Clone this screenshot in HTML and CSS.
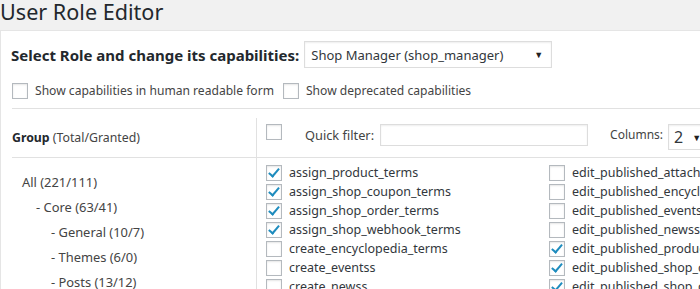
FILE: index.html
```html
<!DOCTYPE html>
<html>
<head>
<meta charset="utf-8">
<link rel="stylesheet" href="styles.css">
</head>
<body>
<h1 class="title">User Role Editor</h1>
<div class="panel">
  <div class="role-row">
    <span class="role-label">Select Role and change its capabilities:</span>
    <div class="select role-select"><span>Shop Manager (shop_manager)</span><span class="arrow">▼</span></div>
  </div>
  <div class="options">
    <label class="opt"><span class="cb"></span>Show capabilities in human readable form</label>
    <label class="opt"><span class="cb"></span>Show deprecated capabilities</label>
  </div>
  <div class="sep"></div>
  <div class="editor">
    <div class="group-head"><b>Group</b>&nbsp;(Total/Granted)</div>
    <div class="caps-head">
      <span class="cb"></span>
      <span class="qf-label">Quick filter:</span>
      <span class="qf-input"></span>
      <span class="col-label">Columns:</span>
      <div class="select col-select"><span>2</span><span class="arrow">▼</span></div>
    </div>
    <div class="groups">
      <div class="g lvl0">All (221/111)</div>
      <div class="g lvl1">- Core (63/41)</div>
      <div class="g lvl2">- General (10/7)</div>
      <div class="g lvl2">- Themes (6/0)</div>
      <div class="g lvl2">- Posts (13/12)</div>
    </div>
    <div class="caps">
      <div class="cap-col">
        <div class="cap"><span class="cb on"></span>assign_product_terms</div>
        <div class="cap"><span class="cb on"></span>assign_shop_coupon_terms</div>
        <div class="cap"><span class="cb on"></span>assign_shop_order_terms</div>
        <div class="cap"><span class="cb on"></span>assign_shop_webhook_terms</div>
        <div class="cap"><span class="cb"></span>create_encyclopedia_terms</div>
        <div class="cap"><span class="cb"></span>create_eventss</div>
        <div class="cap"><span class="cb"></span>create_newss</div>
      </div>
      <div class="cap-col">
        <div class="cap"><span class="cb"></span>edit_published_attachments</div>
        <div class="cap"><span class="cb"></span>edit_published_encyclopedias</div>
        <div class="cap"><span class="cb"></span>edit_published_eventss</div>
        <div class="cap"><span class="cb"></span>edit_published_newss</div>
        <div class="cap"><span class="cb on"></span>edit_published_products</div>
        <div class="cap"><span class="cb on"></span>edit_published_shop_coupons</div>
        <div class="cap"><span class="cb on"></span>edit_published_shop_orders</div>
      </div>
    </div>
  </div>
</div>
</body>
</html>
```
FILE: styles.css
```css
html, body {
  margin: 0;
  padding: 0;
  width: 700px;
  height: 289px;
  overflow: hidden;
  background: #f1f1f1;
  font-family: "Noto Sans", "Open Sans", sans-serif;
  color: #444;
  font-size: 12.5px;
}
.title {
  margin: 0;
  height: 30px;
  font-size: 21.6px;
  font-weight: 400;
  line-height: 24px;
  color: #23282d;
  padding-left: 0;
  overflow: visible;
}
.panel {
  background: #fff;
  border-top: 1px solid #e5e5e5;
  border-left: 1px solid #e5e5e5;
  padding: 10px 0 0 10px;
  height: 300px;
}
.role-row {
  display: flex;
  align-items: center;
  gap: 5px;
}
.role-label {
  font-weight: 700;
  font-size: 15px;
  color: #23282d;
}
.select {
  display: flex;
  align-items: center;
  justify-content: space-between;
  border: 1px solid #ddd;
  box-shadow: inset 0 1px 2px rgba(0,0,0,0.07);
  background: #fff;
  color: #32373c;
  box-sizing: border-box;
}
.role-select {
  width: 248px;
  height: 27px;
  padding: 0 8px 0 6px;
  font-size: 13px;
}
.arrow {
  font-size: 9px;
  color: #222;
}
.options {
  display: flex;
  gap: 9px;
  margin-top: 14px;
  padding-left: 1px;
}
.opt {
  display: flex;
  align-items: center;
  gap: 7px;
  color: #444;
  font-size: 12.1px;
}
.cb {
  display: inline-block;
  position: relative;
  width: 16px;
  height: 16px;
  box-sizing: border-box;
  border: 1px solid #b4b9be;
  background: #fff;
  box-shadow: inset 0 1px 2px rgba(0,0,0,0.1);
  flex: none;
}
.cb.on::after {
  content: "";
  position: absolute;
  left: 4px;
  top: 0px;
  width: 4px;
  height: 9px;
  border-right: 2.5px solid #1e8cbe;
  border-bottom: 2.5px solid #1e8cbe;
  transform: rotate(40deg);
}
.sep {
  height: 1px;
  background: #e1e1e1;
  margin: 9px 0 0 1px;
}
.editor {
  display: grid;
  grid-template-columns: 245px 1fr;
  grid-template-rows: 40px auto;
  margin-top: 9px;
  margin-left: 1px;
}
.group-head {
  border-bottom: 1px solid #e1e1e1;
  border-right: 1px solid #e1e1e1;
  display: flex;
  align-items: center;
  color: #444;
  font-size: 12.3px;
}
.group-head b {
  color: #23282d;
}
.caps-head {
  border-bottom: 1px solid #e1e1e1;
  display: flex;
  align-items: flex-start;
  padding: 6px 0 0 9px;
}
.qf-label {
  margin-left: 23px;
  margin-top: 2px;
  font-size: 12.8px;
}
.qf-input {
  width: 208px;
  height: 22px;
  box-sizing: border-box;
  border: 1px solid #ddd;
  margin-left: 6px;
  box-shadow: inset 0 1px 2px rgba(0,0,0,0.07);
}
.col-label {
  margin-left: 22px;
  margin-top: 2px;
  font-size: 12px;
}
.col-select {
  width: 40px;
  height: 26px;
  margin-left: 5px;
  padding: 0 6px 0 5px;
  font-size: 16px;
  flex: none;
}
.groups {
  border-right: 1px solid #e1e1e1;
  padding: 14px 0 0 10px;
  font-size: 12.9px;
}
.g {
  height: 25px;
  line-height: 20px;
}
.lvl1 { padding-left: 14px; }
.lvl2 { padding-left: 29px; }
.caps {
  display: grid;
  grid-template-columns: 283px 283px;
  padding: 5px 0 0 9px;
}
.cap {
  display: flex;
  align-items: center;
  gap: 7px;
  height: 19px;
  white-space: nowrap;
  color: #32373c;
  font-size: 12.5px;
}
```
